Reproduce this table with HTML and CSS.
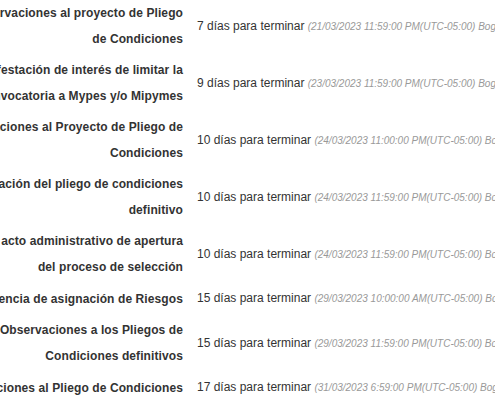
FILE: index.html
```html
<!DOCTYPE html>
<html lang="es">
  <head>
    <meta charset="UTF-8" />
    <meta name="viewport" content="width=device-width, initial-scale=1.0" />
    <title>Cronograma</title>
    <link rel="stylesheet" href="styles.css">
  </head>
  <body>
    <div class="schedule-wrap">
      <table class="schedule">
        <tr>
          <td class="schedule-name">Presentación de observaciones al proyecto de Pliego de Condiciones</td>
          <td class="schedule-due">7 días para terminar <span class="due-date">(21/03/2023 11:59:00 PM(UTC-05:00) Bogotá, Lima, Quito)</span></td>
        </tr>
        <tr>
          <td class="schedule-name">Plazo para la manifestación de interés de limitar la convocatoria a Mypes y/o Mipymes</td>
          <td class="schedule-due">9 días para terminar <span class="due-date">(23/03/2023 11:59:00 PM(UTC-05:00) Bogotá, Lima, Quito)</span></td>
        </tr>
        <tr>
          <td class="schedule-name">Respuesta a observaciones al Proyecto de Pliego de Condiciones</td>
          <td class="schedule-due">10 días para terminar <span class="due-date">(24/03/2023 11:00:00 PM(UTC-05:00) Bogotá, Lima, Quito)</span></td>
        </tr>
        <tr>
          <td class="schedule-name">Fecha de publicación del pliego de condiciones definitivo</td>
          <td class="schedule-due">10 días para terminar <span class="due-date">(24/03/2023 11:59:00 PM(UTC-05:00) Bogotá, Lima, Quito)</span></td>
        </tr>
        <tr>
          <td class="schedule-name">Fecha de publicación acto administrativo de apertura del proceso de selección</td>
          <td class="schedule-due">10 días para terminar <span class="due-date">(24/03/2023 11:59:00 PM(UTC-05:00) Bogotá, Lima, Quito)</span></td>
        </tr>
        <tr>
          <td class="schedule-name">Audiencia de asignación de Riesgos</td>
          <td class="schedule-due">15 días para terminar <span class="due-date">(29/03/2023 10:00:00 AM(UTC-05:00) Bogotá, Lima, Quito)</span></td>
        </tr>
        <tr>
          <td class="schedule-name">Presentación de Observaciones a los Pliegos de Condiciones definitivos</td>
          <td class="schedule-due">15 días para terminar <span class="due-date">(29/03/2023 11:59:00 PM(UTC-05:00) Bogotá, Lima, Quito)</span></td>
        </tr>
        <tr>
          <td class="schedule-name">Respuesta a observaciones al Pliego de Condiciones</td>
          <td class="schedule-due">17 días para terminar <span class="due-date">(31/03/2023 6:59:00 PM(UTC-05:00) Bogotá, Lima, Quito)</span></td>
        </tr>
      </table>
    </div>
  </body>
</html>
```

FILE: styles.css
```css
html,
body {
  margin: 0;
  padding: 0;
  overflow: hidden;
}

body {
  font-family: "Liberation Sans", Arial, sans-serif;
  font-size: 12px;
  color: #333;
  background: #fff;
}

.schedule-wrap {
  width: max-content;
  margin: -3px 0 0 -139px;
}

.schedule {
  border-collapse: collapse;
  border-spacing: 0;
}

.schedule td {
  padding: 3px 7px 2px;
  line-height: 26px;
  vertical-align: middle;
}

.schedule-name {
  width: 315px;
  text-align: right;
  font-weight: bold;
  letter-spacing: 0.1px;
  color: #333;
}

.schedule-due {
  white-space: nowrap;
  color: #333;
}

.due-date {
  font-size: 10px;
  font-style: italic;
  color: #999;
}
```
